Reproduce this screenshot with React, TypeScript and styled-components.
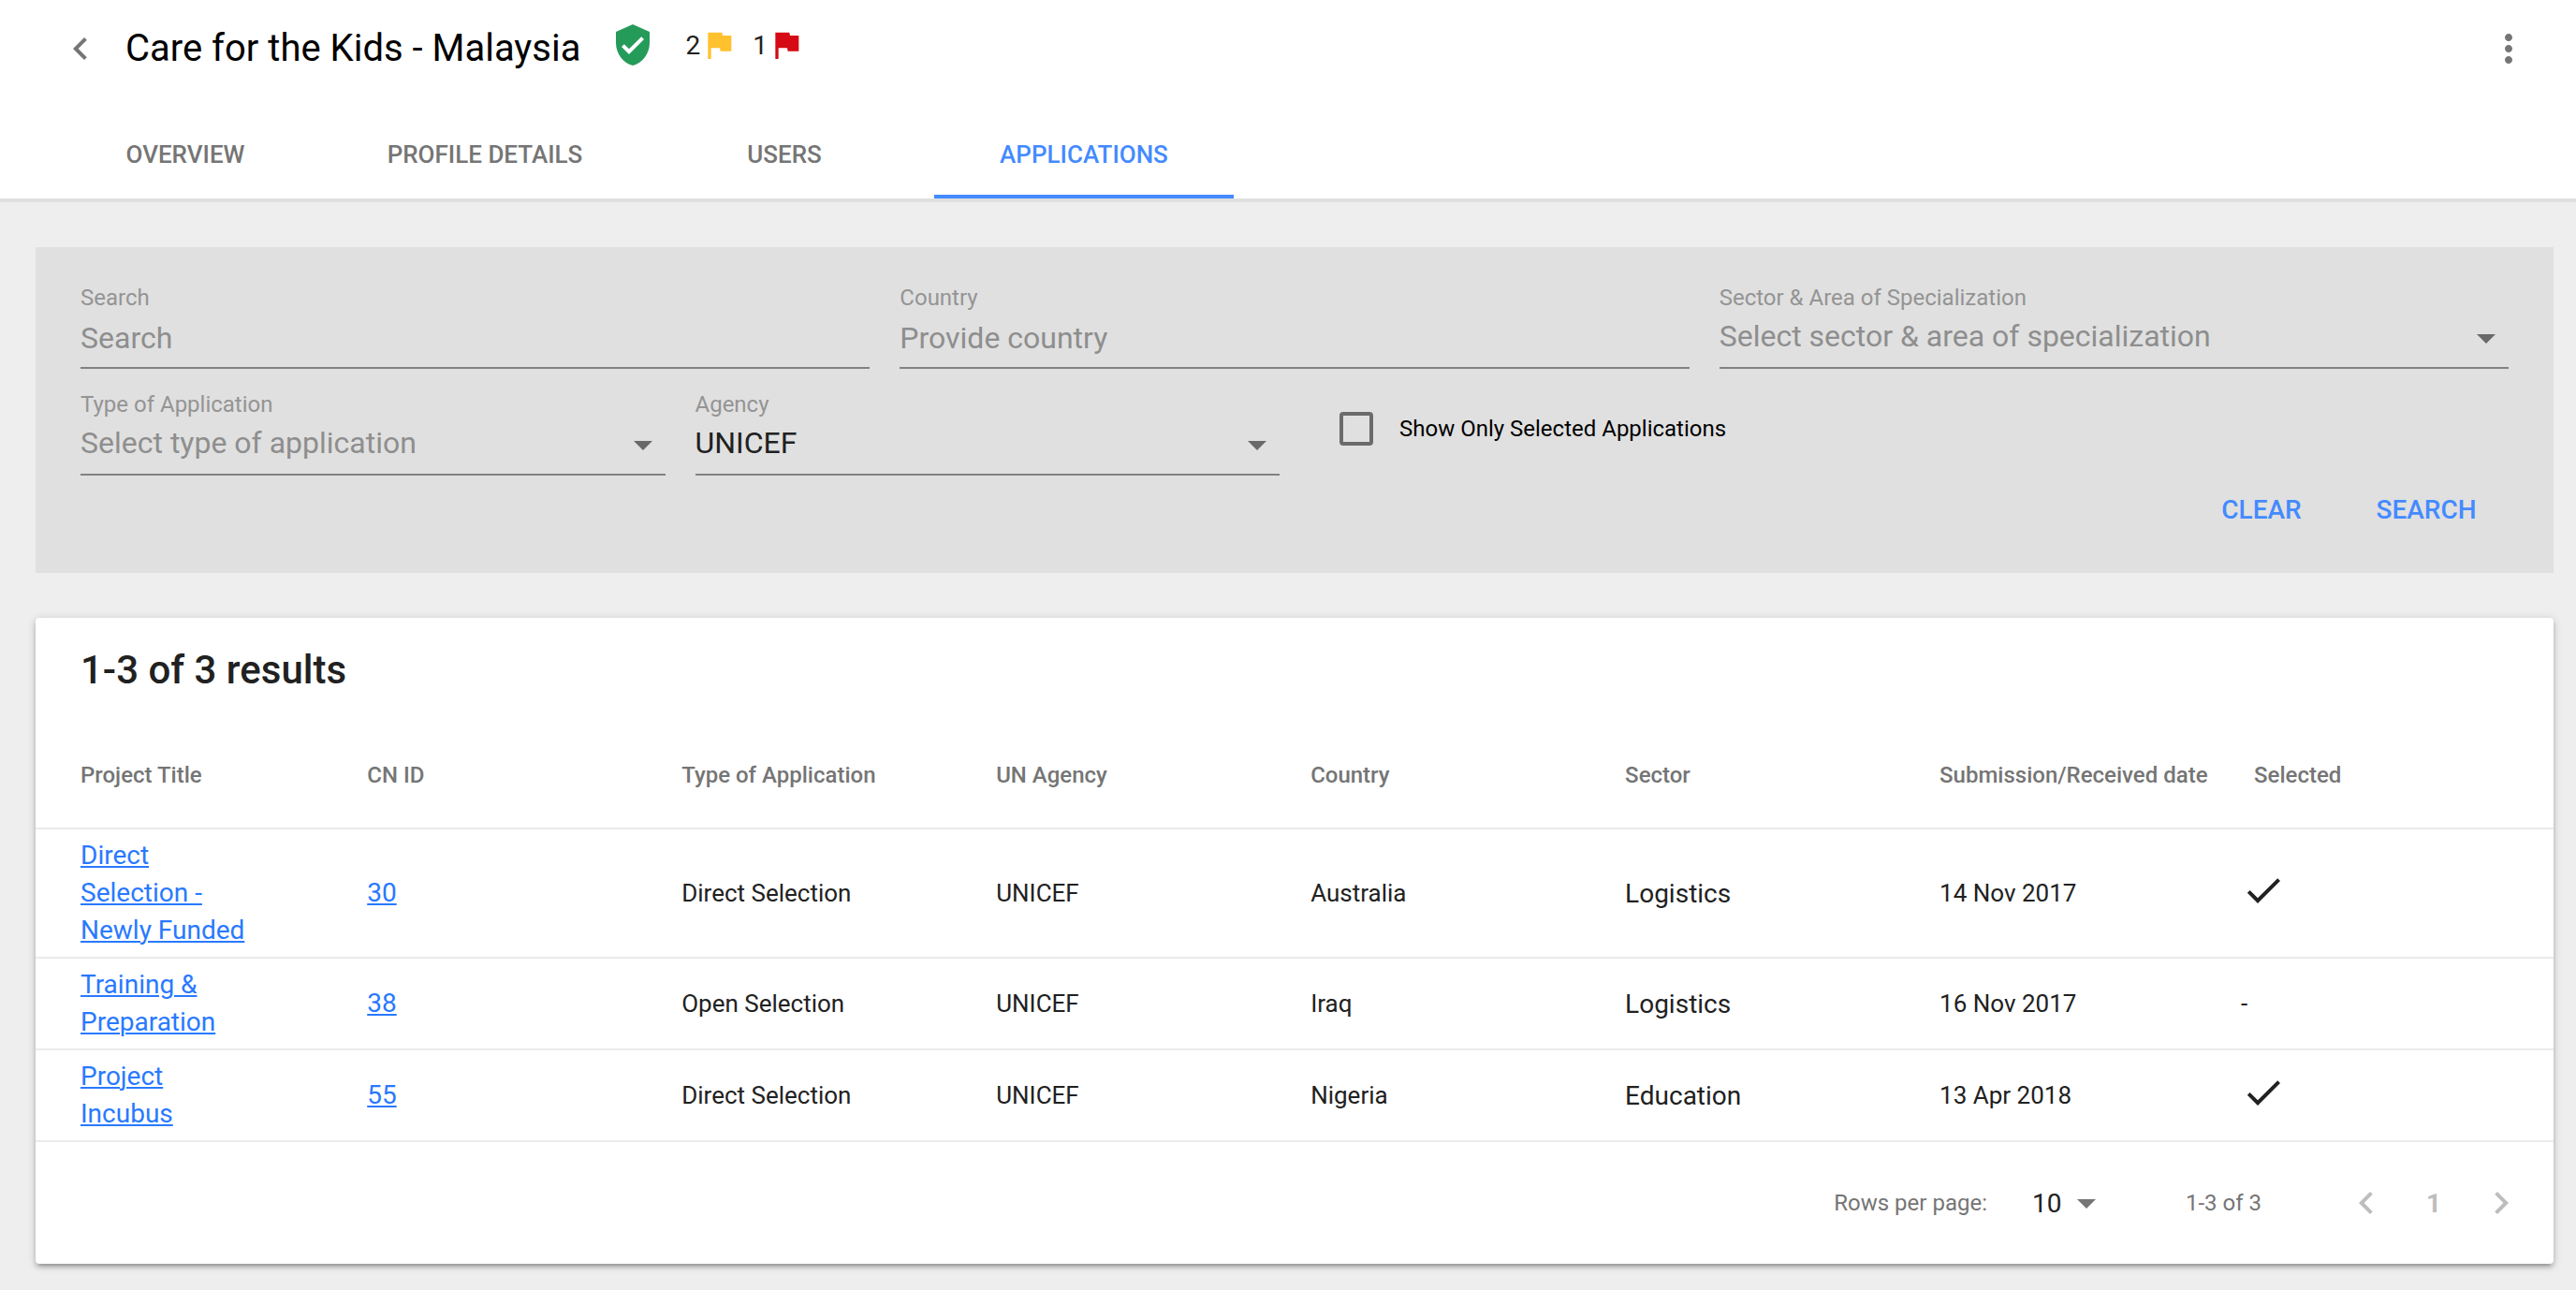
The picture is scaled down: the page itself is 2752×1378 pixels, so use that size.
import React, { useState } from 'react';
import styled, { createGlobalStyle } from 'styled-components';

const color = {
  accent: '#448aff',
  link: '#2979ff',
  text: '#212121',
  muted: '#757575',
  disabled: '#bdbdbd',
  page: '#eeeeee',
  panel: '#e0e0e0',
  rule: '#ebebeb',
};

const GlobalStyle = createGlobalStyle`
  *, *::before, *::after { box-sizing: border-box; }
  body {
    margin: 0;
    background: ${color.page};
    color: ${color.text};
    font-family: Roboto, "Liberation Sans", sans-serif;
    font-size: 26px;
  }
  button, input, select { font: inherit; color: inherit; }
`;

/* ---------- icons ---------- */

const paths = {
  back: 'M15.41 7.41L14 6l-6 6 6 6 1.41-1.41L10.83 12z',
  forward: 'M10 6L8.59 7.41 13.17 12l-4.58 4.59L10 18l6-6z',
  more: 'M12 8c1.1 0 2-.9 2-2s-.9-2-2-2-2 .9-2 2 .9 2 2 2zm0 2c-1.1 0-2 .9-2 2s.9 2 2 2 2-.9 2-2-.9-2-2-2zm0 6c-1.1 0-2 .9-2 2s.9 2 2 2 2-.9 2-2-.9-2-2-2z',
  verified: 'M12 1L3 5v6c0 5.55 3.84 10.74 9 12 5.16-1.26 9-6.45 9-12V5l-9-4zm-2 16l-4-4 1.41-1.41L10 14.17l6.59-6.59L18 9l-8 8z',
  flag: 'M14.4 6L14 4H5v17h2v-7h5.6l.4 2h7V6z',
  dropDown: 'M7 10l5 5 5-5z',
  check: 'M9 16.17L4.83 12l-1.42 1.41L9 19 21 7l-1.41-1.41z',
};

const Svg = styled.svg<{ $size: number; $fill: string }>`
  width: ${(p) => p.$size}px;
  height: ${(p) => p.$size}px;
  fill: ${(p) => p.$fill};
  flex: none;
`;

type IconProps = { name: keyof typeof paths; size?: number; fill?: string; label?: string };

const Icon = ({ name, size = 48, fill = color.muted, label }: IconProps) => (
  <Svg viewBox="0 0 24 24" $size={size} $fill={fill} role={label ? 'img' : undefined} aria-label={label} aria-hidden={label ? undefined : true}>
    <path d={paths[name]} />
  </Svg>
);

/* ---------- header ---------- */

const Header = styled.header`
  background: #fff;
  border-bottom: 4px solid ${color.panel};
`;

const TitleBar = styled.div`
  display: flex;
  align-items: center;
  height: 104px;
  padding: 0 48px 0 62px;
`;

const IconButton = styled.button`
  display: flex;
  padding: 0;
  border: 0;
  background: none;
  cursor: pointer;
`;

const PageTitle = styled.h1`
  margin: 0 32px 0 24px;
  font-size: 40px;
  font-weight: 400;
  line-height: 48px;
  color: #000;
`;

const Status = styled.div`
  display: flex;
  align-items: center;
  flex: 1;
  gap: 16px;
  padding-bottom: 8px;
`;

const Verified = styled.span`
  display: flex;
  margin-right: 16px;
`;

const FlagCount = styled.span`
  display: flex;
  align-items: center;
  font-size: 28px;
`;

const Tabs = styled.nav`
  display: flex;
  padding: 12px 38px 0;
`;

const Tab = styled.button<{ $active: boolean }>`
  width: 320px;
  height: 96px;
  padding: 6px 0 0;
  border: 0;
  border-bottom: 4px solid ${(p) => (p.$active ? color.accent : 'transparent')};
  background: none;
  color: ${(p) => (p.$active ? color.accent : color.muted)};
  font-size: 26px;
  font-weight: 500;
  text-transform: uppercase;
  cursor: pointer;
`;

/* ---------- filter form ---------- */

const Content = styled.main`
  display: flex;
  flex-direction: column;
  gap: 48px;
  padding: 48px 24px 28px 38px;
`;

const Filters = styled.form`
  padding: 42px 48px 32px;
  background: ${color.panel};
`;

const FieldRow = styled.div<{ $columns: number }>`
  display: grid;
  grid-template-columns: repeat(${(p) => p.$columns}, minmax(0, 1fr));
  column-gap: 32px;

  & + & { margin-top: 26px; }
`;

const Field = styled.div`
  display: flex;
  flex-direction: column;
`;

const FieldLabel = styled.label`
  font-size: 24px;
  line-height: 24px;
  color: #949494;
`;

const TextInput = styled.input`
  height: 64px;
  padding: 0;
  border: 0;
  border-bottom: 2px solid #828282;
  border-radius: 0;
  outline: 0;
  background: none;
  font-size: 32px;

  &::placeholder { color: #8e8e8e; opacity: 1; }
`;

const SelectBox = styled.div`
  display: grid;
  grid-template-columns: minmax(0, 1fr);
  align-items: center;
  border-bottom: 2px solid #828282;

  & > * { grid-area: 1 / 1; }
  & > svg { justify-self: end; pointer-events: none; }
`;

const SelectInput = styled.select<{ $empty: boolean }>`
  appearance: none;
  width: 100%;
  height: 62px;
  padding: 0 48px 4px 0;
  border: 0;
  outline: 0;
  background: none;
  font-size: 32px;
  color: ${(p) => (p.$empty ? '#8e8e8e' : color.text)};
`;

const CheckLabel = styled.label`
  display: flex;
  align-items: center;
  gap: 28px;
  height: 76px;
  padding-left: 32px;
  font-size: 24px;
  color: #000;
`;

const Checkbox = styled.input`
  appearance: none;
  width: 36px;
  height: 36px;
  margin: 0;
  border: 4px solid #6b6b6b;
  border-radius: 4px;

  &:checked { background: ${color.accent}; border-color: ${color.accent}; }
`;

const Actions = styled.div`
  display: flex;
  justify-content: flex-end;
`;

const FlatButton = styled.button`
  min-width: 176px;
  height: 72px;
  padding: 0 32px;
  border: 0;
  background: none;
  color: ${color.accent};
  font-size: 28px;
  font-weight: 500;
  text-transform: uppercase;
  cursor: pointer;
`;

/* ---------- results ---------- */

const Card = styled.section`
  background: #fff;
  border-radius: 4px;
  box-shadow: 0 2px 10px rgba(0, 0, 0, 0.2), 0 4px 4px rgba(0, 0, 0, 0.14), 0 6px 2px -4px rgba(0, 0, 0, 0.12);
`;

const CardTitle = styled.h2`
  margin: 0;
  padding: 32px 48px;
  font-size: 42px;
  font-weight: 500;
  line-height: 48px;
`;

const Table = styled.table`
  width: 100%;
  table-layout: fixed;
  border-collapse: separate;
  border-spacing: 0;
`;

const HeadCell = styled.th<{ $first?: boolean }>`
  width: ${(p) => (p.$first ? 'auto' : '12.49%')};
  height: 114px;
  padding: 0 0 0 ${(p) => (p.$first ? 48 : 16)}px;
  border-bottom: 2px solid ${color.rule};
  color: ${color.muted};
  font-size: 24px;
  font-weight: 500;
  text-align: left;
  white-space: nowrap;
`;

const Cell = styled.td<{ $large?: boolean; $flush?: boolean }>`
  padding: 8px 16px 8px ${(p) => (p.$flush ? 2 : 16)}px;
  border-bottom: 2px solid ${color.rule};
  font-size: ${(p) => (p.$large ? 28 : 26)}px;
`;

const TitleCell = styled(Cell)`
  padding: 8px 112px 8px 48px;
`;

const TextLink = styled.a`
  color: ${color.link};
  font-size: 28px;
  line-height: 40px;
  text-decoration: underline;
  text-decoration-thickness: 2px;
  text-underline-offset: 2px;
`;

const Pager = styled.footer`
  display: flex;
  align-items: center;
  justify-content: flex-end;
  min-height: 130px;
  padding-right: 32px;
  color: ${color.muted};
  font-size: 24px;
`;

const PageSize = styled.div`
  display: grid;
  grid-template-columns: 82px;
  align-items: center;
  margin: 0 82px 0 48px;

  & > * { grid-area: 1 / 1; }
  & > svg { justify-self: end; pointer-events: none; }
`;

const PageSizeSelect = styled.select`
  appearance: none;
  height: 48px;
  padding: 0;
  border: 0;
  outline: 0;
  background: none;
  color: ${color.text};
  font-size: 28px;
`;

const PageNav = styled.div`
  display: flex;
  align-items: center;
  margin-left: 88px;
`;

const PageNumber = styled.button`
  width: 96px;
  padding: 0;
  border: 0;
  background: none;
  color: ${color.disabled};
  font-size: 28px;
  font-weight: 700;
`;

/* ---------- data ---------- */

const tabs = ['Overview', 'Profile Details', 'Users', 'Applications'];

const columns = ['Project Title', 'CN ID', 'Type of Application', 'UN Agency', 'Country', 'Sector', 'Submission/Received date', 'Selected'];

const rows = [
  { title: 'Direct Selection - Newly Funded', id: '30', type: 'Direct Selection', agency: 'UNICEF', country: 'Australia', sector: 'Logistics', date: '14 Nov 2017', selected: true },
  { title: 'Training & Preparation', id: '38', type: 'Open Selection', agency: 'UNICEF', country: 'Iraq', sector: 'Logistics', date: '16 Nov 2017', selected: false },
  { title: 'Project Incubus', id: '55', type: 'Direct Selection', agency: 'UNICEF', country: 'Nigeria', sector: 'Education', date: '13 Apr 2018', selected: true },
];

type SelectFieldProps = { id: string; label: string; placeholder?: string; options: string[]; initial?: string };

const SelectField = ({ id, label, placeholder, options, initial = '' }: SelectFieldProps) => {
  const [value, setValue] = useState(initial);
  return (
    <Field>
      <FieldLabel htmlFor={id}>{label}</FieldLabel>
      <SelectBox>
        <SelectInput id={id} value={value} $empty={!value} onChange={(e) => setValue(e.target.value)}>
          {placeholder && <option value="">{placeholder}</option>}
          {options.map((o) => (
            <option key={o} value={o}>{o}</option>
          ))}
        </SelectInput>
        <Icon name="dropDown" fill="#696969" />
      </SelectBox>
    </Field>
  );
};

export default function App() {
  const [active, setActive] = useState('Applications');

  return (
    <>
      <GlobalStyle />
      <Header>
        <TitleBar>
          <IconButton type="button" aria-label="Back"><Icon name="back" /></IconButton>
          <PageTitle>Care for the Kids - Malaysia</PageTitle>
          <Status>
            <Verified><Icon name="verified" fill="#259b5a" label="Verified" /></Verified>
            <FlagCount>2<Icon name="flag" size={40} fill="#ffc12e" label="Yellow flags" /></FlagCount>
            <FlagCount>1<Icon name="flag" size={40} fill="#d50a14" label="Red flags" /></FlagCount>
          </Status>
          <IconButton type="button" aria-label="More options"><Icon name="more" /></IconButton>
        </TitleBar>
        <Tabs>
          {tabs.map((t) => (
            <Tab key={t} type="button" $active={t === active} onClick={() => setActive(t)}>{t}</Tab>
          ))}
        </Tabs>
      </Header>

      <Content>
        <Filters onSubmit={(e) => e.preventDefault()}>
          <FieldRow $columns={3}>
            <Field>
              <FieldLabel htmlFor="search">Search</FieldLabel>
              <TextInput id="search" type="text" placeholder="Search" />
            </Field>
            <Field>
              <FieldLabel htmlFor="country">Country</FieldLabel>
              <TextInput id="country" type="text" placeholder="Provide country" />
            </Field>
            <SelectField id="sector" label="Sector & Area of Specialization" placeholder="Select sector & area of specialization" options={['Education', 'Logistics']} />
          </FieldRow>
          <FieldRow $columns={4}>
            <SelectField id="type" label="Type of Application" placeholder="Select type of application" options={['Direct Selection', 'Open Selection']} />
            <SelectField id="agency" label="Agency" options={['UNICEF']} initial="UNICEF" />
            <CheckLabel>
              <Checkbox type="checkbox" />
              Show Only Selected Applications
            </CheckLabel>
          </FieldRow>
          <Actions>
            <FlatButton type="reset">Clear</FlatButton>
            <FlatButton type="submit">Search</FlatButton>
          </Actions>
        </Filters>

        <Card>
          <CardTitle>1-3 of 3 results</CardTitle>
          <Table>
            <thead>
              <tr>
                {columns.map((c, i) => (
                  <HeadCell key={c} scope="col" $first={i === 0}>{c}</HeadCell>
                ))}
              </tr>
            </thead>
            <tbody>
              {rows.map((r) => (
                <tr key={r.id}>
                  <TitleCell $large><TextLink href="#">{r.title}</TextLink></TitleCell>
                  <Cell $large><TextLink href="#">{r.id}</TextLink></Cell>
                  <Cell>{r.type}</Cell>
                  <Cell>{r.agency}</Cell>
                  <Cell>{r.country}</Cell>
                  <Cell $large>{r.sector}</Cell>
                  <Cell>{r.date}</Cell>
                  <Cell $flush>{r.selected ? <Icon name="check" fill={color.text} label="Selected" /> : '-'}</Cell>
                </tr>
              ))}
            </tbody>
          </Table>
          <Pager>
            <label htmlFor="page-size">Rows per page:</label>
            <PageSize>
              <PageSizeSelect id="page-size" defaultValue="10">
                <option>10</option>
                <option>25</option>
                <option>50</option>
              </PageSizeSelect>
              <Icon name="dropDown" />
            </PageSize>
            <span>1-3 of 3</span>
            <PageNav>
              <IconButton type="button" aria-label="Previous page"><Icon name="back" fill={color.disabled} /></IconButton>
              <PageNumber type="button">1</PageNumber>
              <IconButton type="button" aria-label="Next page"><Icon name="forward" fill={color.disabled} /></IconButton>
            </PageNav>
          </Pager>
        </Card>
      </Content>
    </>
  );
}
